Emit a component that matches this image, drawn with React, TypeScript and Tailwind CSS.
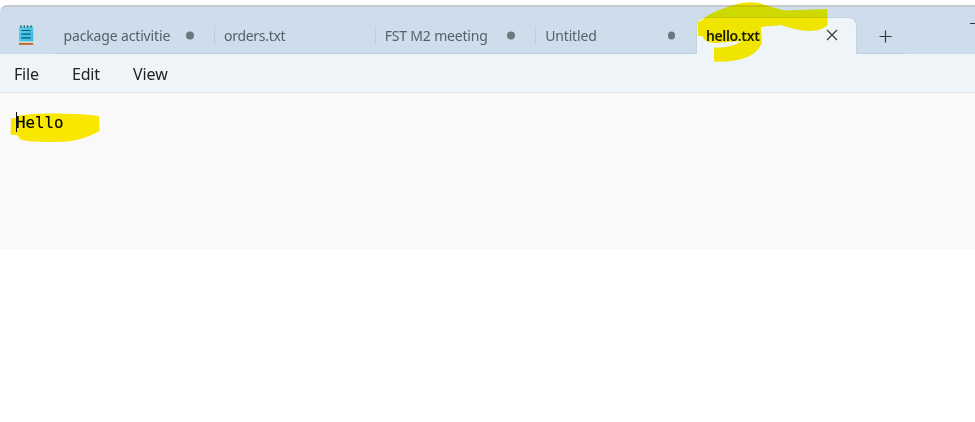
import React from 'react';

type Tab = { label: string; dirty?: boolean; tracking: string; edge?: string };

const tabs: Tab[] = [
  { label: 'package activitie', dirty: true, tracking: 'tracking-[-0.15px]' },
  { label: 'orders.txt', tracking: 'tracking-[-0.3px]' },
  { label: 'FST M2 meeting', dirty: true, tracking: 'tracking-[-0.18px]' },
  { label: 'Untitled', dirty: true, tracking: 'tracking-[-0.18px]', edge: 'rounded-br-[4px]' },
];

function NotepadIcon() {
  return (
    <svg width="16" height="20" viewBox="0 0 16 20">
      <defs>
        <linearGradient id="pad" x1="0" y1="0" x2="1" y2="1">
          <stop offset="0" stopColor="#62d5ee" />
          <stop offset="1" stopColor="#35b4d8" />
        </linearGradient>
      </defs>
      <rect x="1" y="16" width="14.2" height="3" fill="#f4efe9" />
      <rect x="1" y="17.8" width="14.2" height="2" fill="#b8682b" />
      <rect x="1" y="1.7" width="14.2" height="14.9" rx="0.8" fill="url(#pad)" />
      <path d="M3 0.6v2M6.3 0.6v2M9.6 0.6v2M13 0.6v2" stroke="#12566f" strokeWidth="1.4" />
      <path d="M3.3 5.5h9.2M3.3 9.2h9.2M3.3 12.9h9.2" stroke="#07597c" strokeWidth="1.2" />
    </svg>
  );
}

function TabItem({ tab }: { tab: Tab }) {
  return (
    <div
      className={`flex h-full w-[160.6px] shrink-0 items-center border-b border-[#bccddb] bg-[#cdddeb] pl-[10px] pt-[12px] ${tab.edge ?? ''}`}
    >
      <span className={`w-[121px] whitespace-nowrap text-[14px] leading-5 text-[#566066] ${tab.tracking}`}>
        {tab.label}
      </span>
      {tab.dirty && <span className="ml-[1.5px] size-[7.5px] -translate-y-[0.5px] rounded-full bg-[#6d7780]" />}
    </div>
  );
}

export default function App() {
  return (
    <div className="relative h-[422px] w-[975px] overflow-hidden bg-white pt-[5px] font-['Noto_Sans','Open_Sans',sans-serif]">
      <header className="flex h-[49px] overflow-hidden rounded-tl-[7px] border-t-2 border-[#c6c8ca] bg-[#cdddeb]">
        <div className="w-[53.5px] shrink-0 pl-[18px] pt-[18px]">
          <NotepadIcon />
        </div>
        {tabs.map((tab, i) => (
          <React.Fragment key={tab.label}>
            {i > 0 && <div className="z-10 -mr-px mt-[19px] h-[19px] w-px shrink-0 bg-[#bdcedc]" />}
            <TabItem tab={tab} />
          </React.Fragment>
        ))}
        <div className="mt-[10px] flex w-[161px] shrink-0 items-center rounded-t-[8px] border-x border-t border-[#c5d3df] bg-[#eff4f9] pl-[9px]">
          <span className="w-[121px] text-[14px] font-semibold leading-5 tracking-[-0.35px] text-[#191d20]">
            hello.txt
          </span>
          <svg width="12" height="12" viewBox="0 0 12 12" className="-ml-px -translate-y-px">
            <path d="M1 1l10 10M11 1L1 11" stroke="#30363b" strokeWidth="1.1" />
          </svg>
        </div>
        <div className="flex w-[49px] shrink-0 items-center rounded-bl-[4px] border-b border-[#bccddb] pl-[22px] pt-[12px]">
          <svg width="13" height="13" viewBox="0 0 13 13">
            <path d="M6.5 0.5v12M0.5 6.5h12" stroke="#30363b" strokeWidth="1.2" />
          </svg>
        </div>
        <div className="ml-auto mt-[16px] h-px w-[5px] bg-[#30363b]" />
      </header>
      <nav className="flex h-[39px] items-center border-b border-[#dce5ea] bg-[#eff4f8] pl-[14px] pt-[2px] text-[16px] leading-6 text-[#202326]">
        <span className="w-[58px] tracking-[-0.2px]">File</span>
        <span className="w-[61px] tracking-[-0.2px]">Edit</span>
        <span className="tracking-[-0.1px]">View</span>
      </nav>
      <main className="h-[156px] bg-[#f9f9f9] pl-[16px] pt-[20px]">
        <div className="font-['DejaVu_Sans_Mono',monospace] text-[15.8px] leading-5 text-black [-webkit-text-stroke:0.15px_black]">
          Hello
        </div>
      </main>
      <svg
        className="pointer-events-none absolute inset-0 mix-blend-multiply"
        width="975"
        height="422"
        viewBox="0 0 975 422"
      >
        <defs>
          <linearGradient id="marker" gradientUnits="userSpaceOnUse" x1="0" y1="0" x2="0" y2="100">
            <stop offset="0.05" stopColor="#f3e500" />
            <stop offset="0.05" stopColor="#fffb00" />
            <stop offset="0.17" stopColor="#fffb00" />
            <stop offset="0.17" stopColor="#fff000" />
          </linearGradient>
        </defs>
        <path
          fill="url(#marker)"
          d="M698 22 L702 20 C708 14 720 9 734 5 C745 1 757 1.500 765 5 L784 10.5 L827 9 Q827.5 9 827.5 11 L827.5 25 C822 31 810 32 800 30 C793 29 787 27 781 25 C775 26 768 26 761 27 L762 43 C758 53 747 59 734 60.5 C727 62 720 62 714 61.5 L714 47.5 C724 48 735 46 742 41 L716 43 C709 43 706 42 702 36 L698 36 Z"
        />
        <path
          fill="#ffed00"
          d="M11 118 L17 118 Q18 115 23 115 C46 113 72 113 99 116 L99.5 131 C86 139 71 142 55 142 C42 142 25 142 20 139 L17 135 L12 135 Q10.5 135 10.5 133 Z"
        />
      </svg>
      <div className="absolute left-[16px] top-[112px] h-[20px] w-px bg-[#111111]" />
    </div>
  );
}
